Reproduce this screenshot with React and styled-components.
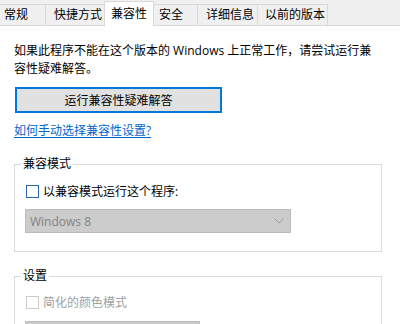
import React from "react";
import styled, { createGlobalStyle } from "styled-components";

const GlobalStyle = createGlobalStyle`
  html, body {
    margin: 0;
    padding: 0;
    background: #ffffff;
  }
  body {
    font-family: "Open Sans", "Noto Sans CJK SC", sans-serif;
    font-size: 12px;
    color: #000;
  }
`;

const tabs = [
  { label: "常规", width: 47, pad: 5 },
  { label: "快捷方式", width: 60, pad: 8 },
  { label: "兼容性", width: 50, pad: 6, active: true },
  { label: "安全", width: 45, pad: 5 },
  { label: "详细信息", width: 61, pad: 8 },
  { label: "以前的版本", width: 71, pad: 7 },
];

const Page = styled.div`
  width: 400px;
  height: 324px;
  overflow: hidden;
  background: #fff;
`;

const TabBar = styled.div`
  display: flex;
  align-items: flex-end;
  height: 26px;
  background: #f0f0f0;
  border-bottom: 1px solid #d9d9d9;
  box-sizing: border-box;
`;

const Tab = styled.div`
  box-sizing: border-box;
  width: ${(p) => p.$width}px;
  height: ${(p) => (p.$active ? 25 : 21)}px;
  margin-bottom: ${(p) => (p.$active ? -1 : 0)}px;
  padding-left: ${(p) => p.$pad}px;
  display: flex;
  align-items: center;
  background: ${(p) => (p.$active ? "#ffffff" : "#f0f0f0")};
  border: 1px solid #d9d9d9;
  border-left-width: ${(p) => (p.$first ? 0 : 1)}px;
  border-bottom: 0;
  margin-left: -1px;
  position: relative;
  z-index: ${(p) => (p.$active ? 1 : 0)};
  white-space: nowrap;
  line-height: 18px;
`;

const Content = styled.div`
  padding: 16px 0 0 14px;
`;

const Intro = styled.p`
  margin: 0;
  line-height: 18px;
  white-space: nowrap;
`;

const RunButton = styled.button`
  display: block;
  box-sizing: border-box;
  margin: 9px 0 0 1px;
  width: 207px;
  height: 26px;
  background: #e1e1e1;
  border: 2px solid #0078d7;
  font: inherit;
  color: #000;
  padding: 0;
`;

const HelpLink = styled.a`
  display: inline-block;
  margin-top: 9px;
  line-height: 18px;
  color: #0066cc;
  text-decoration: underline;
  text-underline-offset: 2px;
`;

const Group = styled.fieldset`
  box-sizing: border-box;
  width: 368px;
  margin: ${(p) => p.$top}px 0 0 0;
  padding: 0 0 ${(p) => p.$bottom}px 0;
  border: 1px solid #dcdcdc;
  min-inline-size: 0;
`;

const Legend = styled.legend`
  margin-left: 6px;
  padding: 0 2px;
  line-height: 18px;
`;

const CheckRow = styled.label`
  display: flex;
  align-items: center;
  height: 18px;
  margin: ${(p) => p.$top}px 0 0 11px;
  color: ${(p) => (p.$disabled ? "#a0a0a0" : "#000")};
`;

const Box = styled.span`
  box-sizing: border-box;
  width: 13px;
  height: 13px;
  border: 1px solid ${(p) => (p.$disabled ? "#cccccc" : "#2a66b0")};
  background: #fff;
  margin-right: 4px;
  flex: none;
`;

const Select = styled.div`
  box-sizing: border-box;
  display: flex;
  align-items: center;
  justify-content: space-between;
  width: ${(p) => p.$width}px;
  height: 24px;
  margin: ${(p) => p.$top}px 0 0 10px;
  padding: 0 6px 0 4px;
  background: #cccccc;
  border: 1px solid #bcbcbc;
  color: #838383;
  font-size: 12px;
`;

const Chevron = () => (
  <svg width="10" height="6" viewBox="0 0 10 6">
    <path d="M0.5 0.5 L5 5 L9.5 0.5" fill="none" stroke="#9a9a9a" strokeWidth="1" />
  </svg>
);

export default function App() {
  return (
    <Page>
      <GlobalStyle />
      <TabBar>
        {tabs.map((t, i) => (
          <Tab key={t.label} $width={t.width} $pad={t.pad} $active={t.active} $first={i === 0}>
            {t.label}
          </Tab>
        ))}
      </TabBar>
      <Content>
        <Intro>
          如果此程序不能在这个版本的 Windows 上正常工作，请尝试运行兼
          <br />
          容性疑难解答。
        </Intro>
        <RunButton>运行兼容性疑难解答</RunButton>
        <HelpLink>如何手动选择兼容性设置?</HelpLink>
        <Group $top={15} $bottom={18}>
          <Legend>兼容模式</Legend>
          <CheckRow $top={9}>
            <Box />
            以兼容模式运行这个程序:
          </CheckRow>
          <Select $width={266} $top={9}>
            <span>Windows 8</span>
            <Chevron />
          </Select>
        </Group>
        <Group $top={15} $bottom={10}>
          <Legend>设置</Legend>
          <CheckRow $top={8} $disabled>
            <Box $disabled />
            简化的颜色模式
          </CheckRow>
          <Select $width={175} $top={10} />
        </Group>
      </Content>
    </Page>
  );
}
